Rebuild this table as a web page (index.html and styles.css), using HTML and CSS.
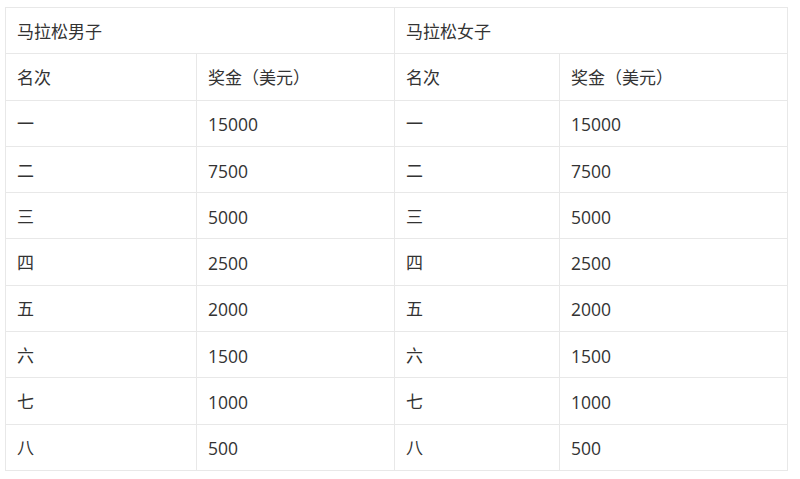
FILE: index.html
```html
<!DOCTYPE html>
<html lang="zh">
<head>
<meta charset="utf-8">
<link rel="stylesheet" href="styles.css">
</head>
<body>
<table class="prize">
  <colgroup>
    <col class="c1"><col class="c2"><col class="c3"><col class="c4">
  </colgroup>
  <tr><td colspan="2">马拉松男子</td><td colspan="2">马拉松女子</td></tr>
  <tr><td>名次</td><td>奖金（美元）</td><td>名次</td><td>奖金（美元）</td></tr>
  <tr><td>一</td><td class="num">15000</td><td>一</td><td class="num">15000</td></tr>
  <tr><td>二</td><td class="num">7500</td><td>二</td><td class="num">7500</td></tr>
  <tr><td>三</td><td class="num">5000</td><td>三</td><td class="num">5000</td></tr>
  <tr><td>四</td><td class="num">2500</td><td>四</td><td class="num">2500</td></tr>
  <tr><td>五</td><td class="num">2000</td><td>五</td><td class="num">2000</td></tr>
  <tr><td>六</td><td class="num">1500</td><td>六</td><td class="num">1500</td></tr>
  <tr><td>七</td><td class="num">1000</td><td>七</td><td class="num">1000</td></tr>
  <tr><td>八</td><td class="num">500</td><td>八</td><td class="num">500</td></tr>
</table>
</body>
</html>
```
FILE: styles.css
```css
html, body {
  margin: 0;
  padding: 0;
  background: #ffffff;
}
body {
  padding: 7px 0 0 5px;
  font-family: "Open Sans", "Noto Sans CJK SC", sans-serif;
  color: #333333;
}
.prize {
  border-collapse: collapse;
  width: 782px;
  table-layout: fixed;
}
.c1 { width: 191px; }
.c2 { width: 198px; }
.c3 { width: 165px; }
.c4 { width: 228px; }
.prize td {
  border: 1px solid #e8e8e8;
  height: 46.3px;
  box-sizing: border-box;
  padding: 2px 0 0 11px;
  font-size: 17px;
  line-height: 20px;
  vertical-align: middle;
}
.prize td.num {
  font-size: 17.5px;
}
```
